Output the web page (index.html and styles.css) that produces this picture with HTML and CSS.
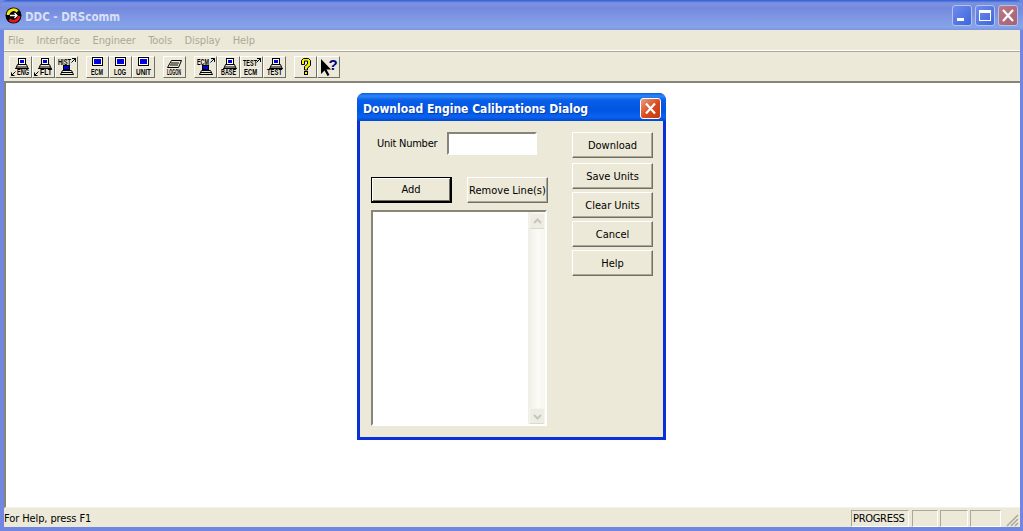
FILE: index.html
```html
<!DOCTYPE html>
<html lang="en">
<head>
<meta charset="utf-8">
<title>DDC - DRScomm</title>
<link rel="stylesheet" href="styles.css">
</head>
<body>
<div class="window">
  <header class="titlebar">
    <svg class="app-logo" width="17" height="17" viewBox="0 0 17 17">
      <circle cx="8.500" cy="8.500" r="8" fill="#000"/>
      <path d="M3 8a5.500 5.500 0 0 1 9.500-3.500" fill="none" stroke="#f5e616" stroke-width="2.800"/>
      <path d="M14 9a5.500 5.500 0 0 1-9.500 3.500" fill="none" stroke="#e01818" stroke-width="2.800"/>
      <path d="M5 8.500h7M9.500 6l2.500 2.500-2.500 2.500" fill="none" stroke="#fff" stroke-width="1.300"/>
    </svg>
    <span class="title-text">DDC - DRScomm</span>
    <div class="caption-buttons">
      <div class="cap-btn cap-blue"><svg width="18" height="19" viewBox="0 0 18 19"><rect x="4" y="12" width="7" height="3" fill="#fff"/></svg></div>
      <div class="cap-btn cap-blue"><svg width="18" height="19" viewBox="0 0 18 19"><path d="M3 4h12v11H3z M4 7v7h10V7z" fill="#fff" fill-rule="evenodd"/></svg></div>
      <div class="cap-btn cap-red"><svg width="18" height="19" viewBox="0 0 18 19"><path d="M4 4l10 11M14 4L4 15" stroke="#fff" stroke-width="2.200" fill="none"/></svg></div>
    </div>
  </header>
  <nav class="menubar">
    <span class="menu-item">File</span>
    <span class="menu-item">Interface</span>
    <span class="menu-item">Engineer</span>
    <span class="menu-item">Tools</span>
    <span class="menu-item">Display</span>
    <span class="menu-item">Help</span>
  </nav>
  <div class="toolbar">
    <div class="tool-group">
      <div class="tool"><svg class="ti" viewBox="0 0 21 20"><use href="#term"/><text x="7" y="17.500" class="tt" textLength="12" lengthAdjust="spacingAndGlyphs">ENG</text><path d="M1.500 18.500l4-4M1.500 18.500h3M1.500 18.500v-3" class="ln"/></svg></div>
      <div class="tool"><svg class="ti" viewBox="0 0 21 20"><use href="#term"/><text x="7" y="17.500" class="tt" textLength="12" lengthAdjust="spacingAndGlyphs">FLT</text><path d="M1.500 18.500l4-4M1.500 18.500h3M1.500 18.500v-3" class="ln"/></svg></div>
      <div class="tool"><svg class="ti" viewBox="0 0 21 20"><use href="#term-low"/><text x="2" y="7.500" class="tt" textLength="13" lengthAdjust="spacingAndGlyphs">HIST</text><path d="M15.500 5.500l4-4M16 1.500h3.500V5" class="ln"/></svg></div>
    </div>
    <div class="tool-group">
      <div class="tool"><svg class="ti" viewBox="0 0 21 20"><use href="#mon"/><text x="4" y="17.500" class="tt" textLength="12" lengthAdjust="spacingAndGlyphs">ECM</text></svg></div>
      <div class="tool"><svg class="ti" viewBox="0 0 21 20"><use href="#mon"/><text x="4" y="17.500" class="tt" textLength="12" lengthAdjust="spacingAndGlyphs">LOG</text></svg></div>
      <div class="tool"><svg class="ti" viewBox="0 0 21 20"><use href="#mon"/><text x="3" y="17.500" class="tt" textLength="15" lengthAdjust="spacingAndGlyphs">UNIT</text></svg></div>
    </div>
    <div class="tool-group">
      <div class="tool"><svg class="ti" viewBox="0 0 21 20"><path d="M7.500 3.500h10l-3 7h-11zM7 6h8M6 8h8" class="ln"/><text x="3" y="17.500" class="tt" textLength="14" lengthAdjust="spacingAndGlyphs">LOGON</text></svg></div>
    </div>
    <div class="tool-group">
      <div class="tool"><svg class="ti" viewBox="0 0 21 20"><use href="#term-low"/><text x="2" y="7.500" class="tt" textLength="12" lengthAdjust="spacingAndGlyphs">ECM</text><path d="M15.500 5.500l4-4M16 1.500h3.500V5" class="ln"/></svg></div>
      <div class="tool"><svg class="ti" viewBox="0 0 21 20"><use href="#term"/><text x="3" y="17.500" class="tt" textLength="15" lengthAdjust="spacingAndGlyphs">BASE</text></svg></div>
      <div class="tool"><svg class="ti" viewBox="0 0 21 20"><text x="2" y="9" class="tt" textLength="14" lengthAdjust="spacingAndGlyphs">TEST</text><text x="3" y="17.500" class="tt" textLength="13" lengthAdjust="spacingAndGlyphs">ECM</text><path d="M15.500 5.500l4-4M16 1.500h3.500V5" class="ln"/></svg></div>
      <div class="tool"><svg class="ti" viewBox="0 0 21 20"><use href="#term"/><text x="3" y="17.500" class="tt" textLength="15" lengthAdjust="spacingAndGlyphs">TEST</text></svg></div>
    </div>
    <div class="tool-group">
      <div class="tool"><svg class="ti" viewBox="0 0 21 20"><path d="M6.500 7.500v-4l2-2h5l2 2v5l-3 2.500v2h-3v-3.500l3-2.500v-3h-3v3.500z" fill="#f5f000" stroke="#000"/><rect x="9.500" y="14.500" width="3" height="3" fill="#f5f000" stroke="#000"/></svg></div>
      <div class="tool"><svg class="ti" viewBox="0 0 21 20"><path d="M3 2v15l3.500-3.500 3 5.500 2-1-3-5.500H13z" fill="#000"/><text x="10.500" y="13" class="tq">?</text></svg></div>
    </div>
  </div>
  <main class="client"></main>
  <footer class="statusbar">
    <span class="status-msg">For Help, press F1</span>
    <span class="pane pane-progress">PROGRESS</span>
    <span class="pane pane-a"></span>
    <span class="pane pane-b"></span>
    <span class="pane pane-c"></span>
    <svg class="grip" width="14" height="14" viewBox="0 0 14 14"><path d="M13 2L2 13M13 6l-7 7M13 10l-3 3" stroke="#aca899" stroke-width="1.500" fill="none"/></svg>
  </footer>
</div>

<section class="dialog">
  <header class="dlg-title">
    <span class="dlg-title-text">Download Engine Calibrations Dialog</span>
    <div class="dlg-close"><svg width="19" height="19" viewBox="0 0 19 19"><path d="M5 4.500l9 10M14 4.500l-9 10" stroke="#fff" stroke-width="2.200" fill="none"/></svg></div>
  </header>
  <div class="dlg-body">
    <div class="dlg-left">
      <div class="unit-row">
        <label class="unit-label">Unit Number</label>
        <div class="sunken unit-input"></div>
      </div>
      <div class="add-row">
        <div class="btn btn-default">Add</div>
        <div class="btn">Remove Line(s)</div>
      </div>
      <div class="sunken listbox">
        <div class="scrollbar">
          <div class="sb-btn"><svg width="15" height="15" viewBox="0 0 15 15"><path d="M4 9l3.500-3.500L11 9" stroke="#c8c6ba" stroke-width="2" fill="none"/></svg></div>
          <div class="sb-btn"><svg width="15" height="15" viewBox="0 0 15 15"><path d="M4 6l3.500 3.500L11 6" stroke="#c8c6ba" stroke-width="2" fill="none"/></svg></div>
        </div>
      </div>
    </div>
    <div class="dlg-right">
      <div class="btn btn-first">Download</div>
      <div class="btn">Save Units</div>
      <div class="btn">Clear Units</div>
      <div class="btn">Cancel</div>
      <div class="btn">Help</div>
    </div>
  </div>
</section>

<svg class="defs" width="0" height="0">
  <defs>
    <g id="term">
      <rect x="8.500" y="1.500" width="7" height="6" fill="#fff" stroke="#000"/>
      <rect x="10" y="3" width="4" height="3" fill="#0000e0"/>
      <path d="M7.500 7.500h9l1 2.500h-11zM5.500 12l1-2M18.500 12l-1-2M5.500 11.500h13" stroke="#000" fill="none"/>
    </g>
    <g id="term-low">
      <rect x="7.500" y="8.500" width="6" height="4" fill="#0000e0" stroke="#000"/>
      <path d="M6.500 13.500h9M5.500 15.500h11M4.500 17.500h13M6.500 13.500l-2 4M15.500 13.500l2 4" stroke="#000" fill="none"/>
    </g>
    <g id="mon">
      <rect x="5.500" y="0.500" width="10" height="8" fill="#fff" stroke="#000"/>
      <rect x="7" y="2" width="7" height="5" fill="#0000e0"/>
    </g>
  </defs>
</svg>
</body>
</html>
```
FILE: styles.css
```css
* { box-sizing: border-box; }
html, body { margin: 0; padding: 0; }
body {
  width: 1023px;
  height: 531px;
  overflow: hidden;
  position: relative;
  background: #7a8fe2;
  font-family: "DejaVu Sans Condensed", "Liberation Sans", Arial, sans-serif;
  font-size: 11px;
  color: #000;
}
.defs { position: absolute; }

.window {
  height: 531px;
  display: flex;
  flex-direction: column;
  padding: 0 3px 4px 4px;
  background: #7186e0;
}
.titlebar {
  height: 30px;
  margin: 0 -3px 0 -4px;
  padding: 0 5px 2px 5px;
  display: flex;
  align-items: center;
  border-radius: 7px 7px 0 0;
  background: linear-gradient(180deg, #2f5bd6 0, #7d94e0 3px, #7489dd 8px, #7f98e4 18px, #86a4ea 27px, #7c94e2 30px);
}
.app-logo { margin-top: 3px; }
.title-text {
  margin-left: 3px;
  font-weight: bold;
  font-size: 11.500px;
  color: #d8e0f6;
  margin-top: 5px;
}
.caption-buttons { margin-left: auto; display: flex; gap: 3px; margin-top: 3px; }
.cap-btn {
  width: 20px; height: 21px;
  border: 1px solid #b4c2f0;
  border-radius: 3px;
}
.cap-btn svg { display: block; }
.cap-blue { background: linear-gradient(135deg, #6f8cec, #3d66dc); }
.cap-red { background: linear-gradient(135deg, #b87a88, #a86070); }

.menubar {
  height: 21px;
  flex: none;
  display: flex;
  align-items: center;
  gap: 12.500px;
  padding: 1px 0 0 4px;
  background: #ece9d8;
  border-bottom: 1px solid #fff;
  box-shadow: 0 1px 0 #aca899;
  position: relative;
}
.menu-item { color: #aca899; letter-spacing: -0.100px; }

.toolbar {
  flex: none;
  height: 30px;
  display: flex;
  gap: 8px;
  padding: 5px 0 0 5px;
  background: #ece9d8;
}
.tool-group { display: flex; }
.tool {
  width: 23px;
  height: 22px;
  background: #ece9d8;
  border: 1px solid;
  border-color: #fff #716f64 #716f64 #fff;
  display: flex;
  align-items: center;
  justify-content: center;
}
.ti { width: 21px; height: 20px; display: block; overflow: visible; }
.tt {
  font-family: "Liberation Sans Narrow", "Liberation Sans", sans-serif;
  font-size: 8.500px;
  font-weight: bold;
  fill: #000;
}
.tq {
  font-family: "Liberation Sans", sans-serif;
  font-size: 15px;
  font-weight: bold;
  fill: #00008b;
}
.ln { stroke: #000; fill: none; }

.client {
  flex: 1;
  min-height: 0;
  background: #fff;
  border-top: 2px solid #87857a;
  border-left: 2px solid #87857a;
  border-bottom: 1px solid #f4f2e8;
}
.statusbar {
  flex: none;
  height: 19px;
  display: flex;
  align-items: center;
  background: #ece9d8;
  padding: 2px 0 0 0;
  position: relative;
}
.status-msg { flex: 1; letter-spacing: -0.100px; }
.pane {
  height: 17px;
  border: 1px solid;
  border-color: #aca899 #fff #fff #aca899;
  line-height: 15px;
}
.pane-progress { width: 58px; padding-left: 1px; margin-right: 3px; letter-spacing: -0.300px; }
.pane-a { width: 26px; margin-right: 2px; }
.pane-b { width: 28px; margin-right: 2px; }
.pane-c { width: 31px; margin-right: 4px; }
.grip { margin-right: 1px; align-self: flex-end; }

.dialog {
  position: absolute;
  left: 357px;
  top: 93px;
  width: 309px;
  height: 347px;
  display: flex;
  flex-direction: column;
  background: #0831d9;
  border-radius: 7px 7px 0 0;
  padding: 0 3px 3px;
}
.dlg-title {
  height: 28px;
  margin: 0 -3px;
  padding: 2px 5px 0 6px;
  display: flex;
  align-items: center;
  justify-content: space-between;
  border-radius: 7px 7px 0 0;
  background: linear-gradient(180deg, #0a5be4 0, #2e86f8 3px, #0a5fe8 7px, #0055e4 17px, #0a62ee 24px, #0048d0 28px);
}
.dlg-title-text {
  color: #fff;
  font-weight: bold;
  font-size: 12px;
  margin-top: 2px;
  text-shadow: 1px 1px 0 #0a3ca8;
}
.dlg-close {
  width: 21px;
  height: 21px;
  border: 1px solid #fff;
  border-radius: 3px;
  background: linear-gradient(135deg, #e8a080, #d8481c 55%, #c43a10);
}
.dlg-close svg { display: block; }

.dlg-body {
  flex: 1;
  min-height: 0;
  background: #ece9d8;
  display: flex;
  padding: 11px 0 0 11px;
}
.dlg-left { width: 201px; display: flex; flex-direction: column; }
.unit-row { display: flex; align-items: center; padding-left: 6px; height: 23px; }
.unit-label { width: 70px; letter-spacing: -0.250px; }
.unit-input { width: 90px; height: 23px; background: #fff; }
.sunken {
  border: 2px solid;
  border-color: #87857a #fff #fff #87857a;
  background: #fff;
}
.add-row { display: flex; justify-content: space-between; width: 177px; margin-top: 22px; }
.btn {
  width: 81px;
  height: 26px;
  background: #ece9d8;
  border: 1px solid;
  border-color: #fff #716f64 #716f64 #fff;
  box-shadow: inset -1px -1px 0 #aca899;
  display: flex;
  align-items: center;
  justify-content: center;
  white-space: nowrap;
}
.btn-default {
  border: 2px solid #000;
  border-top-width: 1px;
  border-left-width: 1px;
  box-shadow: inset 1px 1px 0 #fff, inset -1px -1px 0 #716f64;
}
.listbox {
  width: 176px;
  height: 216px;
  margin-top: 7px;
  display: flex;
  justify-content: flex-end;
}
.scrollbar {
  width: 17px;
  display: flex;
  flex-direction: column;
  justify-content: space-between;
  padding: 1px 0 0 0;
  background: linear-gradient(90deg, #f0efe6, #fbfbf7 60%, #f7f6f0);
}
.sb-btn {
  width: 16px;
  height: 16px;
  margin-left: 1px;
  border: 1px solid #f5f4ee;
  border-bottom-color: #dcd9c8;
  border-radius: 2px;
  background: #eeede5;
}
.sb-btn svg { display: block; }
.dlg-right {
  display: flex;
  flex-direction: column;
  gap: 3px;
}
.btn-first { margin-bottom: 2px; }
```
